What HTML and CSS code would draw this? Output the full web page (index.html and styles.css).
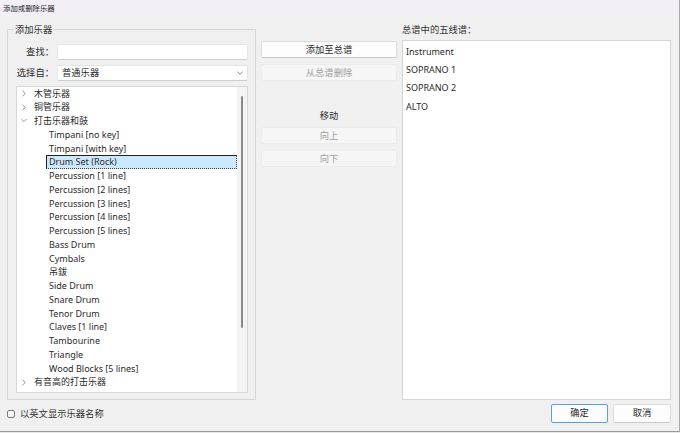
FILE: index.html
```html
<!DOCTYPE html>
<html lang="zh-CN">
<head>
<meta charset="utf-8">
<title>添加或删除乐器</title>
<link rel="stylesheet" href="styles.css">
</head>
<body>
<div class="window">
  <div class="titlebar">添加或删除乐器</div>
  <div class="main">
    <div class="col-left">
      <fieldset class="group">
        <legend>添加乐器</legend>
        <div class="form">
          <label class="lbl">查找：</label>
          <div class="input"></div>
          <label class="lbl">选择自：</label>
          <div class="combo"><span>普通乐器</span><svg class="chev" width="6" height="4" viewBox="0 0 6 4"><path d="M0.5 0.8 L3 3.2 L5.5 0.8" fill="none" stroke="#777" stroke-width="0.9"/></svg></div>
        </div>
        <div class="tree">
          <ul class="rows">
            <li class="cat"><svg class="arrow" width="6" height="7" viewBox="0 0 6 7"><path d="M1.5 0.8 L4.3 3.5 L1.5 6.2" fill="none" stroke="#8a8a8a" stroke-width="0.9"/></svg>木管乐器</li>
            <li class="cat"><svg class="arrow" width="6" height="7" viewBox="0 0 6 7"><path d="M1.5 0.8 L4.3 3.5 L1.5 6.2" fill="none" stroke="#8a8a8a" stroke-width="0.9"/></svg>铜管乐器</li>
            <li class="cat"><svg class="arrow" width="6" height="7" viewBox="0 0 6 7"><path d="M0.3 2 L3 4.7 L5.7 2" fill="none" stroke="#8a8a8a" stroke-width="0.9"/></svg>打击乐器和鼓</li>
            <li class="item">Timpani [no key]</li>
            <li class="item">Timpani [with key]</li>
            <li class="item selected">Drum Set (Rock)</li>
            <li class="item">Percussion [1 line]</li>
            <li class="item">Percussion [2 lines]</li>
            <li class="item">Percussion [3 lines]</li>
            <li class="item">Percussion [4 lines]</li>
            <li class="item">Percussion [5 lines]</li>
            <li class="item">Bass Drum</li>
            <li class="item">Cymbals</li>
            <li class="item">吊鈸</li>
            <li class="item">Side Drum</li>
            <li class="item">Snare Drum</li>
            <li class="item">Tenor Drum</li>
            <li class="item">Claves [1 line]</li>
            <li class="item">Tambourine</li>
            <li class="item">Triangle</li>
            <li class="item">Wood Blocks [5 lines]</li>
            <li class="cat"><svg class="arrow" width="6" height="7" viewBox="0 0 6 7"><path d="M1.5 0.8 L4.3 3.5 L1.5 6.2" fill="none" stroke="#8a8a8a" stroke-width="0.9"/></svg>有音高的打击乐器</li>
          </ul>
          <div class="scroll"><div class="thumb"></div></div>
        </div>
      </fieldset>
      <div class="check"><span class="box"></span>以英文显示乐器名称</div>
    </div>

    <div class="col-mid">
      <div class="btn">添加至总谱</div>
      <div class="btn disabled">从总谱删除</div>
      <div class="move-label">移动</div>
      <div class="btn disabled">向上</div>
      <div class="btn disabled">向下</div>
    </div>

    <div class="col-right">
      <div class="hdr">总谱中的五线谱：</div>
      <ul class="staves">
        <li>Instrument</li>
        <li>SOPRANO 1</li>
        <li>SOPRANO 2</li>
        <li>ALTO</li>
      </ul>
      <div class="actions">
        <div class="btn dlg primary">确定</div>
        <div class="btn dlg">取消</div>
      </div>
    </div>
  </div>
</div>
</body>
</html>
```

FILE: styles.css
```css
* { box-sizing: border-box; }
html, body { margin: 0; padding: 0; }
body {
  width: 680px;
  height: 433px;
  overflow: hidden;
  background: #e8e8e8;
  font-family: "Noto Sans", "Noto Sans CJK SC", sans-serif;
  font-size: 9.3px;
  color: #2a2a2a;
}
.window {
  width: 680px;
  height: 432px;
  background: #f0f0f0;
  border-right: 1px solid #a8a8a8;
  border-bottom: 1px solid #9a9a9a;
  display: flex;
  flex-direction: column;
}
.titlebar {
  flex: none;
  height: 16px;
  line-height: 16px;
  padding-left: 3px;
  background: #f3eff7;
  font-size: 7.4px;
  color: #222;
}
.main {
  flex: 1;
  display: grid;
  grid-template-columns: 249px 136px 269px;
  column-gap: 5px;
  padding: 7.5px 0 0 7px;
  align-items: start;
}

/* left group */
.group {
  margin: 0;
  border: 1px solid #d6d6d6;
  padding: 8px 7px 6px 8px;
  min-width: 0;
}
.group legend {
  padding: 0 1px;
  margin-left: -2px;
  line-height: 12px;
  color: #333;
}
.form {
  display: grid;
  grid-template-columns: 41px 1fr;
  row-gap: 5px;
  align-items: center;
}
.lbl {
  text-align: right;
  padding-right: 3px;
  line-height: 16px;
  color: #2a2a2a;
}
.input, .combo {
  height: 16px;
  background: #fff;
  border: 1px solid #e6e6e6;
  border-bottom-color: #cfcfcf;
  border-radius: 2px;
}
.combo {
  display: flex;
  align-items: center;
  justify-content: space-between;
  padding: 0 4px 0 4px;
  line-height: 14px;
}
.tree {
  margin-top: 5px;
  height: 307px;
  display: flex;
  border: 1px solid #d8d8d8;
  background: #fff;
  font-size: 9px;
}
.rows {
  list-style: none;
  margin: 0;
  padding: 0;
  flex: 1;
}
.rows li {
  height: 13.75px;
  line-height: 13.75px;
  white-space: nowrap;
}
.cat {
  display: flex;
  align-items: center;
  padding-left: 4px;
}
.arrow {
  flex: none;
  margin-right: 7px;
}
.item {
  margin-left: 29px;
  padding-left: 3px;
}
.item.selected {
  background: #cce8ff;
  border: 1px dotted #444;
  border-top: 1px solid #222;
  border-left: 1px solid #222;
  padding-left: 2px;
  line-height: 11.75px;
}
.scroll {
  flex: none;
  width: 10px;
  background: #f3f3f3;
  padding-top: 9px;
}
.thumb {
  width: 2px;
  height: 232px;
  margin-left: 3.5px;
  background: #8a8a8a;
  border-radius: 1px;
}
.check {
  margin-top: 8px;
  display: flex;
  align-items: center;
  line-height: 12px;
  color: #333;
}
.box {
  width: 8px;
  height: 8px;
  border: 1px solid #7a7a7a;
  border-radius: 2px;
  background: #fafafa;
  margin-right: 5px;
}

/* middle */
.col-mid {
  padding-top: 17px;
  display: flex;
  flex-direction: column;
}
.btn {
  height: 17px;
  line-height: 15px;
  text-align: center;
  background: #fdfdfd;
  border: 1px solid #dcdcdc;
  border-bottom-color: #c9c9c9;
  border-radius: 2px;
  color: #2a2a2a;
}
.btn.disabled {
  background: #f6f6f6;
  border-color: #ebebeb;
  color: #a0a0a0;
}
.col-mid .btn + .btn { margin-top: 6px; }
.move-label {
  margin-top: 29.5px;
  margin-bottom: 5px;
  line-height: 12px;
  text-align: center;
  color: #2a2a2a;
}

/* right */
.col-right {
  display: flex;
  flex-direction: column;
}
.hdr {
  line-height: 12px;
  margin-bottom: 4.5px;
  color: #333;
}
.staves {
  list-style: none;
  margin: 0;
  padding: 1.7px 0 0 3px;
  height: 359.5px;
  background: #fff;
  border: 1px solid #d4d4d4;
  font-size: 9px;
}
.staves li {
  height: 18.3px;
  line-height: 18.3px;
}
.actions {
  margin-top: 4.5px;
  display: flex;
  justify-content: flex-end;
  gap: 5px;
}
.btn.dlg {
  height: 18.5px;
  line-height: 16.5px;
  width: 57px;
}
.btn.dlg + .btn.dlg { width: 58px; }
.btn.primary {
  border: 1px solid #5a9fdc;
  background: #fcfcfc;
}
```
